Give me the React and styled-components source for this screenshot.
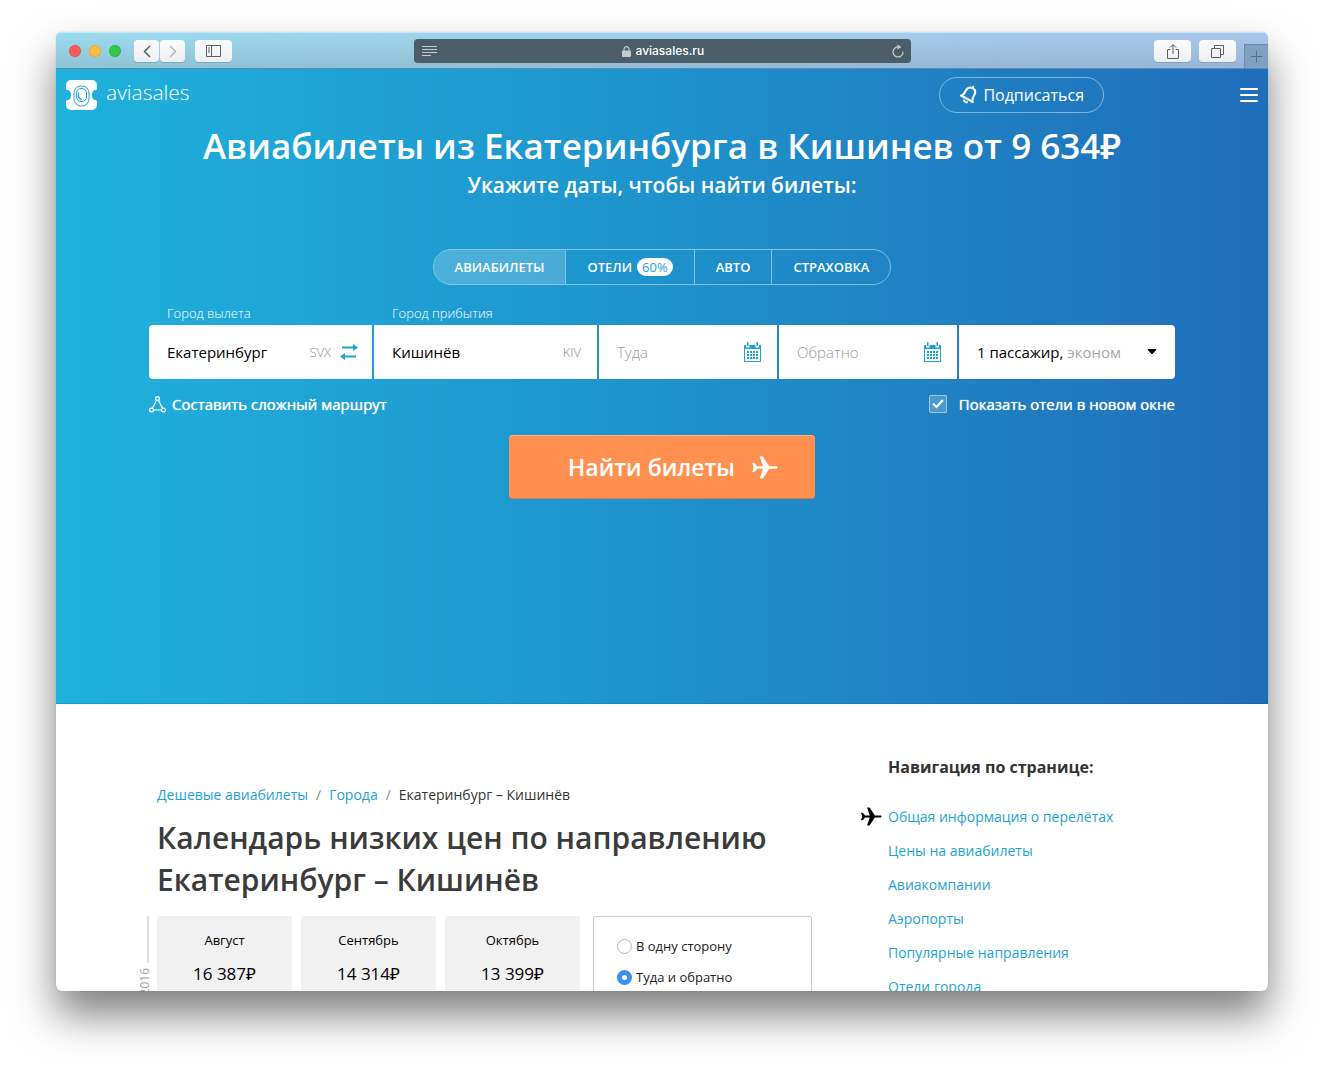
import React, { useState } from "react";
import styled, { createGlobalStyle } from "styled-components";

const GlobalStyle = createGlobalStyle`
  *, *::before, *::after { box-sizing: border-box; }
  body {
    margin: 0;
    background: #fff;
    font-family: "Open Sans", "Noto Sans", sans-serif;
    color: #333;
    -webkit-font-smoothing: antialiased;
  }
  button, input { font: inherit; color: inherit; }
  button { padding: 0; border: 0; background: none; cursor: pointer; }
  h1, h2, h3, p, ul, ol { margin: 0; padding: 0; }
  ul, ol { list-style: none; }
  svg { display: block; flex: none; }
`;

const accent = "#1ea2d4";
const line = "rgba(255, 255, 255, 0.45)";

/* ---------- Browser window ---------- */

const Desktop = styled.div`
  height: 100vh;
  padding: 32px 56px 80px;
  overflow: hidden;
`;

const Window = styled.div`
  display: flex;
  flex-direction: column;
  height: 100%;
  border-radius: 6px;
  overflow: hidden;
  background: #fff;
  box-shadow: 0 0 1px rgba(0, 0, 0, 0.35), 0 24px 42px rgba(0, 0, 0, 0.5);
`;

const Toolbar = styled.div`
  flex: none;
  display: grid;
  grid-template-columns: 1fr minmax(0, 497px) 1fr;
  align-items: center;
  height: 37px;
  padding-top: 2px;
  border-bottom: 1px solid #5a8bb0;
  background: linear-gradient(rgba(110, 120, 130, 0), rgba(110, 120, 130, 0.25)),
    linear-gradient(90deg, #9bdcf0, #a3d0ef 60%, #a9c8ee);
  box-shadow: inset 0 1px rgba(255, 255, 255, 0.4);
`;

const ToolbarStart = styled.div`
  display: flex;
  align-items: center;
  padding-left: 13px;
`;

const ToolbarEnd = styled.div`
  display: flex;
  align-items: center;
  justify-content: flex-end;
  gap: 8px;
  height: 34px;
`;

const Lights = styled.div`
  display: flex;
  gap: 8px;
  margin-right: 13px;
`;

const Light = styled.button`
  width: 12px;
  height: 12px;
  border-radius: 50%;
  background: ${(p) => p.$color};
  box-shadow: inset 0 0 0 1px rgba(0, 0, 0, 0.1);
`;

const ChromeButton = styled.button`
  display: grid;
  place-items: center;
  width: ${(p) => (p.$narrow ? 25 : 37)}px;
  height: 22px;
  border-radius: 4px;
  background: linear-gradient(#fafbfc, #eceff1);
  box-shadow: 0 1px rgba(60, 90, 110, 0.25);
  color: ${(p) => (p.$muted ? "#b4b8ba" : "#5c6062")};
`;

const History = styled.div`
  display: flex;
  gap: 1px;
  margin-right: 10px;
`;

const NewTab = styled.button`
  display: grid;
  place-items: center;
  align-self: flex-end;
  width: 24px;
  height: 24px;
  border-top: 1px solid #6a8dae;
  border-left: 1px solid #6a8dae;
  background: #819fc0;
  color: #54708d;
`;

const Address = styled.div`
  display: flex;
  align-items: center;
  justify-content: space-between;
  height: 24px;
  padding: 0 6px 0 8px;
  border-radius: 4px;
  background: #4a5d68;
  color: #c3cacf;
`;

const AddressCenter = styled.label`
  display: flex;
  align-items: center;
  gap: 5px;
`;

const AddressInput = styled.input`
  width: 70px;
  padding: 0;
  border: 0;
  outline: 0;
  background: none;
  color: #fff;
  font: 500 12px/18px Inter, sans-serif;
`;

const IconButton = styled.button`
  display: grid;
  place-items: center;
`;

const Page = styled.div`
  flex: 1;
  min-height: 0;
  overflow: hidden;
`;

/* ---------- Hero ---------- */

const Hero = styled.section`
  height: 635px;
  background: linear-gradient(90deg, #1fb1dc, #1e92cc 50%, #206db9);
  box-shadow: inset 0 -1px rgba(0, 60, 120, 0.15);
  color: #fff;
`;

const Header = styled.header`
  display: flex;
  align-items: center;
  height: 52px;
  padding: 0 10px;
`;

const Brand = styled.a`
  display: flex;
  align-items: center;
  gap: 9px;
  margin-right: auto;
  color: #fff;
  font-size: 21px;
  font-weight: 300;
  line-height: 32px;
  text-decoration: none;
`;

const BrandName = styled.span`
  padding-bottom: 6px;
`;

const Subscribe = styled.button`
  display: flex;
  align-items: center;
  gap: 6px;
  height: 36px;
  margin-right: 136px;
  padding: 0 19px;
  border: 1px solid ${line};
  border-radius: 18px;
  font-size: 16px;
`;

const Titles = styled.div`
  text-align: center;
`;

const Title = styled.h1`
  font-size: 35px;
  font-weight: 600;
  line-height: 50px;
`;

const Subtitle = styled.p`
  font-size: 21px;
  font-weight: 600;
  line-height: 28px;
`;

const Tabs = styled.nav`
  display: flex;
  width: fit-content;
  height: 36px;
  margin: 50px auto 16px;
  border: 1px solid ${line};
  border-radius: 18px;
  overflow: hidden;
`;

const Tab = styled.button`
  display: flex;
  align-items: center;
  gap: 5px;
  padding: 0 21px;
  background: ${(p) => (p.$active ? "rgba(255, 255, 255, 0.2)" : "none")};
  font-size: 13px;
  font-weight: 600;
  text-transform: uppercase;
  & + & { border-left: 1px solid ${line}; }
`;

const Badge = styled.span`
  padding: 0 5px;
  border-radius: 9px;
  background: #fff;
  color: ${accent};
  font-size: 13px;
  font-weight: 400;
  line-height: 18px;
`;

const Search = styled.form`
  width: 100%;
  max-width: 1026px;
  margin: 0 auto;
`;

const Fields = styled.div`
  display: grid;
  grid-template-columns:
    minmax(0, 223fr) minmax(0, 223fr) minmax(0, 178fr)
    minmax(0, 178fr) minmax(0, 216fr);
  gap: 2px;
  align-items: end;
`;

const FieldLabel = styled.label`
  display: block;
  padding-left: 18px;
  font-size: 13px;
  font-weight: 300;
  line-height: 24px;
`;

const Box = styled.div`
  display: flex;
  align-items: center;
  gap: 9px;
  height: 54px;
  padding: 0 ${(p) => p.$end || 16}px 0 18px;
  border-radius: ${(p) => (p.$first ? "4px 0 0 4px" : "0")};
  background: #fff;
  color: #000;
  font-size: 15px;
`;

const TextInput = styled.input`
  flex: 1;
  min-width: 0;
  padding: 0;
  border: 0;
  outline: 0;
  background: none;
  &::placeholder { color: #999; font-weight: 300; opacity: 1; }
`;

const Code = styled.span`
  color: #8c8c8c;
  font-size: 13px;
  font-weight: 300;
`;

const Swap = styled(IconButton)`
  color: ${accent};
`;

const Passengers = styled.button`
  display: flex;
  align-items: center;
  justify-content: space-between;
  height: 54px;
  padding: 0 18px;
  border-radius: 0 4px 4px 0;
  background: #fff;
  color: #000;
  font-size: 15px;
`;

const Muted = styled.span`
  color: #a6a6a6;
`;

const Options = styled.div`
  display: flex;
  justify-content: space-between;
  align-items: center;
  height: 50px;
  font-size: 15px;
  text-shadow: 0 0 1px #fff;
`;

const RouteLink = styled.a`
  display: flex;
  align-items: center;
  gap: 6px;
  color: #fff;
  text-decoration: none;
`;

const CheckLabel = styled.label`
  display: flex;
  align-items: center;
  gap: 12px;
`;

const CheckBox = styled.span`
  display: grid;
  place-items: center;
  color: #fff;
  & > * { grid-area: 1 / 1; }
  & > svg { pointer-events: none; }
`;

const CheckInput = styled.input`
  appearance: none;
  width: 18px;
  height: 18px;
  margin: 0;
  border: 1px solid ${line};
  border-radius: 2px;
  background: rgba(255, 255, 255, 0.2);
`;

const Submit = styled.button`
  display: flex;
  align-items: center;
  justify-content: center;
  gap: 16px;
  width: 306px;
  max-width: 100%;
  height: 64px;
  margin: 6px auto 0;
  padding-left: 22px;
  border-radius: 4px;
  background: #ff9050;
  box-shadow: inset 0 1px #ffb48a, inset 0 -1px #d67c4c;
  color: #fff;
  font-size: 23px;
  font-weight: 600;
`;

/* ---------- Content ---------- */

const Content = styled.div`
  display: grid;
  grid-template-columns: minmax(0, 1fr) 325px;
  gap: 48px;
  max-width: 1046px;
  margin: 0 auto;
`;

const Main = styled.main`
  padding-top: 80px;
`;

const Crumbs = styled.ol`
  display: flex;
  gap: 8px;
  padding-left: 18px;
  font-size: 14px;
  line-height: 22px;
`;

const Crumb = styled.li`
  & + &::before {
    content: "/";
    margin-right: 8px;
    color: #888;
  }
`;

const Link = styled.a`
  color: ${accent};
  text-decoration: none;
`;

const Heading = styled.h2`
  padding: 11px 0 15px 18px;
  color: #3b3b3b;
  font-size: 30px;
  font-weight: 600;
  line-height: 42px;
`;

const Calendar = styled.div`
  display: flex;
`;

const Rail = styled.div`
  flex: none;
  width: 18px;
  color: #a0a0a0;
`;

const RailLine = styled.div`
  width: 2px;
  height: 47px;
  margin: 0 0 5px 8px;
  background: #ddd;
`;

const Year = styled.div`
  width: 12px;
  font-size: 12px;
  line-height: 12px;
  writing-mode: vertical-rl;
  transform: rotate(180deg);
`;

const Months = styled.ul`
  flex: 1;
  display: grid;
  grid-template-columns: repeat(3, 1fr);
  gap: 9px;
  margin-right: 13px;
`;

const Month = styled.li`
  height: 110px;
  padding-top: 14px;
  border-radius: 3px;
  background: #f1f1f1;
  color: #000;
  text-align: center;
`;

const MonthName = styled.p`
  font-size: 13px;
  line-height: 20px;
`;

const Price = styled.p`
  margin-top: 12px;
  font-size: 17px;
  line-height: 24px;
`;

const TripType = styled.fieldset`
  width: 219px;
  margin: 0;
  padding: 18px 23px;
  border: 1px solid #ccc;
  border-radius: 2px;
`;

const RadioLabel = styled.label`
  display: flex;
  align-items: center;
  gap: 4px;
  height: 22px;
  margin-bottom: 9px;
  font-size: 13px;
  color: #222;
`;

const Radio = styled.input`
  appearance: none;
  width: 15px;
  height: 15px;
  margin: 0;
  border: 1px solid #b5b5b5;
  border-radius: 50%;
  background: #fff;
  &:checked { border: 5px solid #3b8ff5; }
`;

const Sidebar = styled.aside`
  padding-top: 51px;
`;

const SideTitle = styled.h3`
  padding-left: 28px;
  font-size: 16px;
  font-weight: 700;
  line-height: 24px;
`;

const SideList = styled.ul`
  padding-top: 20px;
  font-size: 14px;
`;

const SideItem = styled.li`
  display: grid;
  grid-template-columns: 22px 1fr;
  gap: 6px;
  align-items: center;
  height: 34px;
  color: #000;
  & > a { grid-column: 2; }
`;

/* ---------- Icons ---------- */

const Stroke = ({ w, h, width = 1, children, ...rest }) => (
  <svg width={w} height={h} viewBox={`0 0 ${w} ${h}`} fill="none" stroke="currentColor" strokeWidth={width} aria-hidden="true" {...rest}>
    {children}
  </svg>
);

const Plane = ({ w, h }) => (
  <svg width={w} height={h} viewBox="0 0 27 23" fill="currentColor" aria-hidden="true">
    <path d="M8.700.6c1.200-.2 2.300-.2 3.300.2L18.200 10.200l7 .1c1.600.1 1.600 2.300 0 2.400l-7 .1L12 22.200c-1 .4-2.100.4-3.300.2L12 12.800H6.200L3.700 15.800 1.200 16.200 2.700 11.500 1.200 6.800l2.500.4 2.500 3H12z" />
  </svg>
);

const Logo = () => (
  <svg width="31" height="30" viewBox="0 0 31 30" aria-hidden="true">
    <path fill="#fff" d="M5 0h21a5 5 0 0 1 5 5v3.500q0 1.500-1.500 1.500c-2.200 0-3.500 2-3.500 5s1.300 5 3.500 5q1.500 0 1.500 1.500V25a5 5 0 0 1-5 5H5a5 5 0 0 1-5-5v-3.500q0-1.500 1.500-1.500C3.700 20 5 18 5 15s-1.300-5-3.500-5Q0 10 0 8.500V5a5 5 0 0 1 5-5z" />
    <g fill="none" stroke="#1ea5d6">
      <rect x="8" y="6" width="15" height="20" rx="7" />
      <rect x="10.500" y="8.500" width="10" height="13" rx="4.500" />
      <path strokeWidth="1.300" d="M12.500 12.500v3.500q0 3 3 3" />
    </g>
  </svg>
);

const Bell = () => (
  <svg width="18" height="20" viewBox="0 0 18 20" fill="none" stroke="currentColor" strokeWidth="2" strokeLinejoin="round" strokeLinecap="round" aria-hidden="true">
    <path d="M2 10.500c3-.4 3.500-2.700 4.700-4.700C8.200 3.200 10.700 2 13.500 3c2.700 1.500 3.300 4.300 1.800 7-1.200 2-2.800 3.900-1.500 7z" />
    <path d="M5 15.500c.5 1.300 1.700 2 3 1.700" />
    <path d="M13.500 3 14.200 1.800" />
  </svg>
);

const CalendarIcon = () => (
  <svg width="17" height="20" viewBox="0 0 17 20" fill={accent} aria-hidden="true">
    <path d="M3 0h1.500v4H3zM12.500 0H14v4h-1.500zM0 3h2v2.500h3.500V3h6v2.500H15V3h2v17H0zM1 7v12h15V7z" fillRule="evenodd" />
    {[9, 12, 15].map((y) => [3, 6, 9, 12].map((x) => <rect key={`${x}-${y}`} x={x} y={y} width="2" height="2" />))}
  </svg>
);

const tabs = [
  { name: "Авиабилеты", active: true },
  { name: "Отели", badge: "60%" },
  { name: "Авто" },
  { name: "Страховка" },
];

const months = [
  ["Август", "16 387₽"],
  ["Сентябрь", "14 314₽"],
  ["Октябрь", "13 399₽"],
];

const sections = [
  "Общая информация о перелётах",
  "Цены на авиабилеты",
  "Авиакомпании",
  "Аэропорты",
  "Популярные направления",
  "Отели города",
];

function BrowserToolbar() {
  return (
    <Toolbar>
      <ToolbarStart>
        <Lights>
          <Light $color="#fc5b57" aria-label="Закрыть" />
          <Light $color="#fdbc40" aria-label="Свернуть" />
          <Light $color="#34c84a" aria-label="Развернуть" />
        </Lights>
        <History>
          <ChromeButton $narrow aria-label="Назад">
            <Stroke w={8} h={13} width={1.500}><path d="M7 1 1.500 6.500 7 12" /></Stroke>
          </ChromeButton>
          <ChromeButton $narrow $muted aria-label="Вперёд">
            <Stroke w={8} h={13} width={1.500}><path d="m1 1 5.500 5.500L1 12" /></Stroke>
          </ChromeButton>
        </History>
        <ChromeButton aria-label="Боковая панель">
          <Stroke w={15} h={12}>
            <path d="M.5.5h14v11H.5zM5.500.5v11M2 3h2M2 5h2M2 7h2" />
          </Stroke>
        </ChromeButton>
      </ToolbarStart>
      <Address>
        <IconButton aria-label="Режим чтения">
          <Stroke w={15} h={11}><path d="M0 .5h15M0 3.500h15M0 6.500h15M0 9.500h9" /></Stroke>
        </IconButton>
        <AddressCenter>
          <svg width="9" height="11" viewBox="0 0 9 11" aria-hidden="true">
            <path d="M2 5V3.200a2.500 2.500 0 0 1 5 0V5" fill="none" stroke="currentColor" strokeWidth="1.200" />
            <rect y="4.500" width="9" height="6.500" rx="1" fill="currentColor" />
          </svg>
          <AddressInput aria-label="Адрес" defaultValue="aviasales.ru" />
        </AddressCenter>
        <IconButton aria-label="Обновить">
          <Stroke w={14} h={14} width={1.200}>
            <path d="M7.500 3A5 5 0 1 0 12 7.500" />
            <path d="m6.500.5 4 2.500-4 2.500z" fill="currentColor" stroke="none" />
          </Stroke>
        </IconButton>
      </Address>
      <ToolbarEnd>
        <ChromeButton aria-label="Поделиться">
          <Stroke w={12} h={15}><path d="M3.500 5.500h-3v9h11v-9h-3M6 10V1M3 3.500l3-3 3 3" /></Stroke>
        </ChromeButton>
        <ChromeButton aria-label="Все вкладки">
          <Stroke w={13} h={13}><path d="M.5 3.500h9v9h-9zM3.500 3.500v-3h9v9h-3" /></Stroke>
        </ChromeButton>
        <NewTab aria-label="Новая вкладка">
          <Stroke w={11} h={11}><path d="M5.500 0v11M0 5.500h11" /></Stroke>
        </NewTab>
      </ToolbarEnd>
    </Toolbar>
  );
}

function SearchForm() {
  const [newWindow, setNewWindow] = useState(true);
  return (
    <Search onSubmit={(e) => e.preventDefault()}>
      <Fields>
        <div>
          <FieldLabel htmlFor="origin">Город вылета</FieldLabel>
          <Box $first $end={14}>
            <TextInput id="origin" defaultValue="Екатеринбург" />
            <Code>SVX</Code>
            <Swap type="button" aria-label="Поменять города местами">
              <svg width="18" height="18" viewBox="0 0 18 18" fill="currentColor" aria-hidden="true">
                <path d="M2 3.500h11V1l5 3.500L13 8V5.500H2zM16 12.500H5V10l-5 3.500L5 17v-2.500h11z" />
              </svg>
            </Swap>
          </Box>
        </div>
        <div>
          <FieldLabel htmlFor="destination">Город прибытия</FieldLabel>
          <Box>
            <TextInput id="destination" defaultValue="Кишинёв" />
            <Code>KIV</Code>
          </Box>
        </div>
        <Box>
          <TextInput aria-label="Туда" placeholder="Туда" />
          <CalendarIcon />
        </Box>
        <Box>
          <TextInput aria-label="Обратно" placeholder="Обратно" />
          <CalendarIcon />
        </Box>
        <Passengers type="button" aria-haspopup="dialog">
          <span>1 пассажир, <Muted>эконом</Muted></span>
          <svg width="10" height="6" viewBox="0 0 10 6" aria-hidden="true">
            <path d="M1 .5h8L5 5z" fill="#000" stroke="#000" strokeLinejoin="round" />
          </svg>
        </Passengers>
      </Fields>
      <Options>
        <RouteLink href="#route">
          <Stroke w={17} h={17} width={1.200}>
            <circle cx="8.500" cy="2.500" r="1.900" />
            <circle cx="2.500" cy="14" r="1.900" />
            <circle cx="14.500" cy="14" r="1.900" />
            <path d="M7.600 4.300 3.400 12.200M9.400 4.300l4.200 7.900M4.500 14h8" />
          </Stroke>
          Составить сложный маршрут
        </RouteLink>
        <CheckLabel>
          <CheckBox>
            <CheckInput type="checkbox" checked={newWindow} onChange={(e) => setNewWindow(e.target.checked)} />
            {newWindow && (
              <Stroke w={12} h={10} width={2}><path d="m1 4.500 3.500 3.500L11 1" /></Stroke>
            )}
          </CheckBox>
          Показать отели в новом окне
        </CheckLabel>
      </Options>
      <Submit type="submit">
        Найти билеты
        <Plane w={27} h={23} />
      </Submit>
    </Search>
  );
}

export default function App() {
  const [trip, setTrip] = useState("round");
  return (
    <>
      <GlobalStyle />
      <Desktop>
        <Window>
          <BrowserToolbar />
          <Page>
            <Hero>
              <Header>
                <Brand href="#home">
                  <Logo />
                  <BrandName>aviasales</BrandName>
                </Brand>
                <Subscribe><Bell />Подписаться</Subscribe>
                <IconButton aria-label="Меню">
                  <Stroke w={18} h={14} width={2} strokeLinecap="round"><path d="M1 1h16M1 7h16M1 13h16" /></Stroke>
                </IconButton>
              </Header>
              <Titles>
                <Title>Авиабилеты из Екатеринбурга в Кишинев от 9 634₽</Title>
                <Subtitle>Укажите даты, чтобы найти билеты:</Subtitle>
              </Titles>
              <Tabs>
                {tabs.map((t) => (
                  <Tab key={t.name} $active={t.active}>
                    {t.name}
                    {t.badge && <Badge>{t.badge}</Badge>}
                  </Tab>
                ))}
              </Tabs>
              <SearchForm />
            </Hero>
            <Content>
              <Main>
                <Crumbs>
                  <Crumb><Link href="#cheap">Дешевые авиабилеты</Link></Crumb>
                  <Crumb><Link href="#cities">Города</Link></Crumb>
                  <Crumb>Екатеринбург – Кишинёв</Crumb>
                </Crumbs>
                <Heading>Календарь низких цен по направлению Екатеринбург – Кишинёв</Heading>
                <Calendar>
                  <Rail>
                    <RailLine />
                    <Year>2016</Year>
                  </Rail>
                  <Months>
                    {months.map(([name, price]) => (
                      <Month key={name}>
                        <MonthName>{name}</MonthName>
                        <Price>{price}</Price>
                      </Month>
                    ))}
                  </Months>
                  <TripType aria-label="Тип перелёта">
                    <RadioLabel>
                      <Radio type="radio" name="trip" checked={trip === "one"} onChange={() => setTrip("one")} />
                      В одну сторону
                    </RadioLabel>
                    <RadioLabel>
                      <Radio type="radio" name="trip" checked={trip === "round"} onChange={() => setTrip("round")} />
                      Туда и обратно
                    </RadioLabel>
                  </TripType>
                </Calendar>
              </Main>
              <Sidebar>
                <SideTitle>Навигация по странице:</SideTitle>
                <SideList>
                  {sections.map((s, i) => (
                    <SideItem key={s}>
                      {i === 0 && <Plane w={22} h={19} />}
                      <Link href={`#section-${i}`}>{s}</Link>
                    </SideItem>
                  ))}
                </SideList>
              </Sidebar>
            </Content>
          </Page>
        </Window>
      </Desktop>
    </>
  );
}
